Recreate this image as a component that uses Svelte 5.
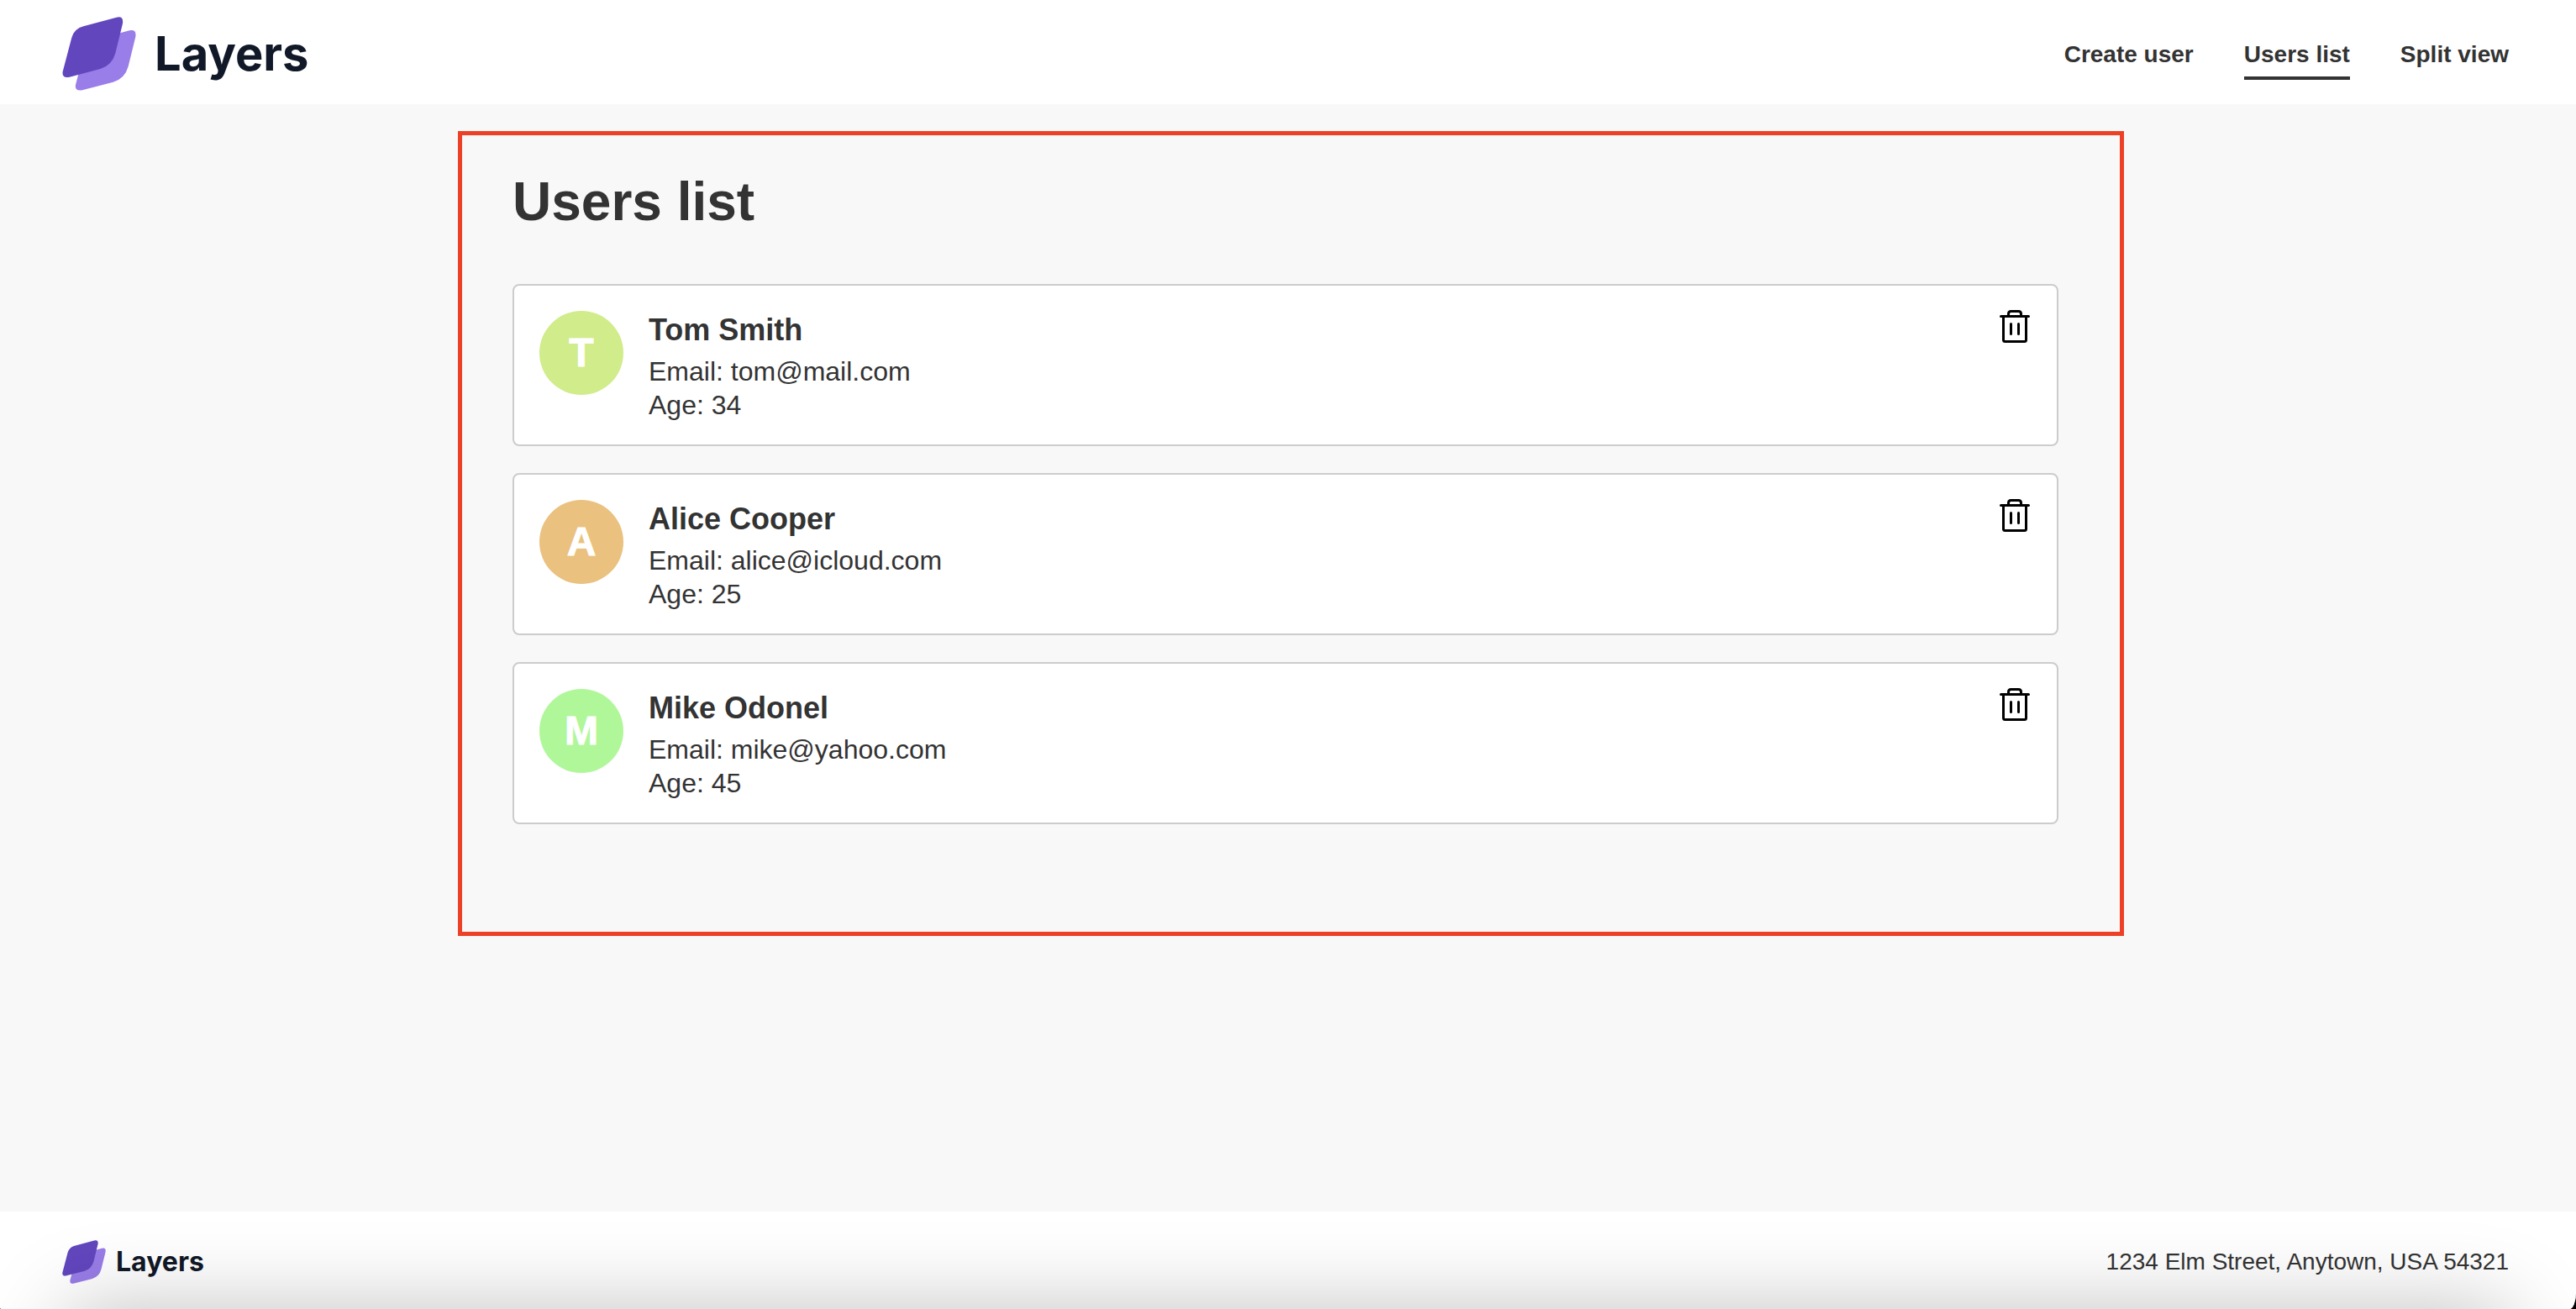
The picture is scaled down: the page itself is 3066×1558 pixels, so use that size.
<script>
  let users = $state([
    { name: 'Tom Smith', email: 'tom@mail.com', age: 34, color: '#d1ec8a' },
    { name: 'Alice Cooper', email: 'alice@icloud.com', age: 25, color: '#eac17e' },
    { name: 'Mike Odonel', email: 'mike@yahoo.com', age: 45, color: '#b0f79a' }
  ]);

  const links = ['Create user', 'Users list', 'Split view'];
  let current = $state('Users list');

  function remove(user) {
    users = users.filter((u) => u.email !== user.email);
  }
</script>

{#snippet logo()}
  <svg class="mark" viewBox="72 60 264 264" aria-hidden="true">
    <path fill="#997de8" d="M194 141 L312 109 Q338 103 334 131 L308 237 Q296 281 254 293 L144 322 Q116 327 120 303 L152 181 Q162 149 194 141 Z" />
    <path fill="#6246be" d="M148 94 L266 62 Q292 56 288 84 L262 190 Q250 234 208 246 L98 275 Q70 280 74 256 L106 134 Q116 102 148 94 Z" />
  </svg>
  <span>Layers</span>
{/snippet}

<div class="page">
  <header>
    <a class="logo" href="#home">{@render logo()}</a>
    <nav>
      {#each links as link}
        <a href="#{link.toLowerCase().replace(' ', '-')}" class:active={link === current} onclick={() => (current = link)}>{link}</a>
      {/each}
    </nav>
  </header>

  <main>
    <section>
      <h1>Users list</h1>
      <ul>
        {#each users as user (user.email)}
          <li>
            <div class="avatar" style:background={user.color}>{user.name[0]}</div>
            <div class="info">
              <h2>{user.name}</h2>
              <p>Email: {user.email}</p>
              <p>Age: {user.age}</p>
            </div>
            <button type="button" aria-label="Delete {user.name}" onclick={() => remove(user)}>
              <svg viewBox="0 0 40 40" aria-hidden="true">
                <path d="M3.5 6.5H36.5M6.5 6.5V34.5Q6.5 36.5 8.5 36.5H31.5Q33.5 36.5 33.5 34.5V6.5M12.5 6V3.5Q12.5 .5 15.5 .5H24.5Q27.5 .5 27.5 3.5V6M15.5 15.5V27.5M24.5 15.5V27.5" />
              </svg>
            </button>
          </li>
        {/each}
      </ul>
    </section>
  </main>

  <footer>
    <a class="logo small" href="#home">{@render logo()}</a>
    <address>1234 Elm Street, Anytown, USA 54321</address>
  </footer>
</div>

<style>
  :global(body) {
    margin: 0;
    background: #000;
  }

  .page {
    display: flex;
    flex-direction: column;
    min-height: 100vh;
    background: #f8f8f8;
    border-radius: 0 0 8px 2px / 0 0 20px 2px;
    overflow: hidden;
    color: #333;
    font-family: Arial, 'Liberation Sans', sans-serif;
    font-size: 32px;
    line-height: 40px;
  }

  header,
  footer {
    display: flex;
    align-items: center;
    justify-content: space-between;
    padding: 4px 80px 0 74px;
    background: #fff;
  }

  header {
    height: 120px;
  }

  footer {
    position: relative;
    height: 112px;
    overflow: hidden;
  }

  /* soft shade rising from the bottom edge */
  footer::after {
    content: '';
    position: absolute;
    top: 100%;
    left: 80px;
    right: 80px;
    height: 200px;
    box-shadow: 0 0 100px rgb(0 0 0 / 25%);
    pointer-events: none;
  }

  .logo {
    display: flex;
    align-items: center;
    gap: 22px;
    color: #111827;
    font-family: Inter, sans-serif;
    font-size: 56px;
    font-weight: 700;
    line-height: 64px;
    text-decoration: none;
  }

  .mark {
    width: 88px;
    height: 88px;
  }

  .small {
    gap: 12px;
    font-size: 32px;
    line-height: 40px;
  }

  .small .mark {
    width: 52px;
    height: 52px;
  }

  nav {
    display: flex;
    gap: 60px;
  }

  nav a {
    padding: 16px 0 10px;
    border-bottom: 4px solid transparent;
    color: inherit;
    font-size: 28px;
    font-weight: 700;
    line-height: 32px;
    text-decoration: none;
  }

  nav a.active {
    border-bottom-color: #333;
  }

  main {
    flex: 1;
    padding: 32px 0 32px 7px;
  }

  section {
    box-sizing: border-box;
    max-width: 1983px;
    margin: 0 auto;
    padding: 41px 73px 128px 60px;
    border: 5px solid #ec4126;
  }

  h1 {
    margin: 0 0 60px;
    font-size: 64px;
    line-height: 76px;
  }

  ul {
    display: flex;
    flex-direction: column;
    gap: 32px;
    margin: 0;
    padding: 0;
    list-style: none;
  }

  li {
    display: flex;
    align-items: flex-start;
    gap: 30px;
    padding: 30px 30px 27px;
    border: 2px solid #ccc;
    border-radius: 8px;
    background: #fff;
  }

  .avatar {
    width: 100px;
    height: 100px;
    border-radius: 50%;
    color: #fff;
    font-size: 48px;
    font-weight: 700;
    line-height: 100px;
    text-align: center;
    -webkit-text-stroke: 1px #fff;
  }

  .info {
    flex: 1;
  }

  h2 {
    margin: 0 0 6px;
    font-size: 36px;
    line-height: 46px;
  }

  p {
    margin: 0;
  }

  button {
    width: 40px;
    height: 40px;
    padding: 0;
    border: 0;
    background: none;
    cursor: pointer;
  }

  button svg {
    display: block;
    width: 40px;
    height: 40px;
    overflow: visible;
    fill: none;
    stroke: #000;
    stroke-width: 3;
    stroke-linecap: round;
  }

  address {
    font-size: 28px;
    font-style: normal;
    line-height: 32px;
  }
</style>
